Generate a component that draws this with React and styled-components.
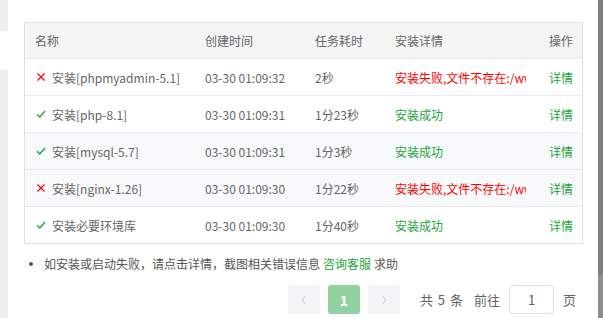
import React from "react";
import styled, { createGlobalStyle } from "styled-components";

const GlobalStyle = createGlobalStyle`
  html, body {
    margin: 0;
    padding: 0;
    background: #fff;
  }
  body {
    font-family: "Microsoft YaHei", "Noto Sans CJK SC", "Liberation Sans", sans-serif;
    font-size: 12px;
    color: #666;
  }
`;

const rows = [
  { ok: false, name: "安装[phpmyadmin-5.1]", time: "03-30 01:09:32", cost: "2秒", detail: "安装失败,文件不存在:/ww" },
  { ok: true, name: "安装[php-8.1]", time: "03-30 01:09:31", cost: "1分23秒", detail: "安装成功" },
  { ok: true, name: "安装[mysql-5.7]", time: "03-30 01:09:31", cost: "1分3秒", detail: "安装成功", shade: true },
  { ok: false, name: "安装[nginx-1.26]", time: "03-30 01:09:30", cost: "1分22秒", detail: "安装失败,文件不存在:/ww", shade: true },
  { ok: true, name: "安装必要环境库", time: "03-30 01:09:30", cost: "1分40秒", detail: "安装成功" },
];

const Page = styled.div`
  display: flex;
  width: 603px;
  height: 318px;
  overflow: hidden;
`;

const LeftStrip = styled.div`
  width: 8px;
  display: flex;
  flex-direction: column;
`;

const StripPart = styled.div`
  height: ${(p) => (p.h ? `${p.h}px` : "auto")};
  flex: ${(p) => (p.h ? "none" : 1)};
  background: ${(p) => (p.blank ? "#fff" : "#efefef")};
`;

const Main = styled.div`
  flex: 1;
  padding: 22px 14px 0 16px;
`;

const ScrollBar = styled.div`
  width: 5px;
  margin-left: 1px;
  display: flex;
  flex-direction: column;
`;

const ScrollPart = styled.div`
  height: ${(p) => (p.h ? `${p.h}px` : "auto")};
  flex: ${(p) => (p.h ? "none" : 1)};
  background: ${(p) => p.color};
`;

const Table = styled.div`
  border: 1px solid #e0e0e0;
  border-bottom-color: #e4e4e4;
`;

const Row = styled.div`
  display: grid;
  grid-template-columns: 170px 110px 80px 156px 1fr;
  height: ${(p) => (p.head ? 35 : 36)}px;
  align-items: center;
  background: ${(p) => (p.head ? "#f4f4f4" : p.shade ? "#f8f9fb" : "#fff")};
  border-bottom: 1px solid #e8ebef;
  &:last-child {
    border-bottom: none;
  }
`;

const Cell = styled.div`
  padding: 0 ${(p) => (p.right ? "9px" : "10px")} 0 10px;
  white-space: nowrap;
  overflow: hidden;
  display: flex;
  align-items: center;
  justify-content: ${(p) => (p.right ? "flex-end" : "flex-start")};
  color: ${(p) => p.color || "#666"};
`;

const Clip = styled.span`
  display: block;
  max-width: 131px;
  overflow: hidden;
  white-space: nowrap;
`;

const StatusIcon = styled.svg`
  width: 10px;
  height: 10px;
  margin: 0 6px 0 1px;
  flex: none;
`;

const Notes = styled.ul`
  margin: 10px 0 0;
  padding: 0 0 0 20px;
  line-height: 20px;
  color: #555;
`;

const Note = styled.li`
  list-style: none;
  position: relative;
  &::before {
    content: "";
    position: absolute;
    left: -15px;
    top: 8px;
    width: 4px;
    height: 4px;
    border-radius: 50%;
    background: #555;
  }
`;

const Link = styled.a`
  color: #20a53a;
  text-decoration: none;
  margin: 0 3px;
`;

const Pager = styled.div`
  display: flex;
  align-items: center;
  justify-content: flex-end;
  margin-top: 11px;
  padding-right: 7px;
  color: #606266;
  font-size: 13px;
`;

const PageBtn = styled.button`
  width: 32px;
  height: 29px;
  margin-right: 8px;
  border: none;
  border-radius: 3px;
  padding: 0;
  display: flex;
  align-items: center;
  justify-content: center;
  background: ${(p) => (p.active ? "#91d2a0" : "#f4f4f6")};
  color: ${(p) => (p.active ? "#fff" : "#c0c4cc")};
  font-family: inherit;
  font-size: 14px;
  font-weight: bold;
`;

const Total = styled.span`
  margin-left: 12px;
  margin-right: 11px;
  word-spacing: 2px;
`;

const JumpInput = styled.div`
  width: 43px;
  height: 27px;
  margin: 0 9px 0 9px;
  border: 1px solid #dcdfe6;
  border-radius: 4px;
  display: flex;
  align-items: center;
  justify-content: center;
  color: #606266;
`;

const Check = () => (
  <StatusIcon viewBox="0 0 10 10">
    <path d="M1 5.2 L3.8 8 L9 2" fill="none" stroke="#20a53a" strokeWidth="1.4" />
  </StatusIcon>
);

const Cross = () => (
  <StatusIcon viewBox="0 0 10 10">
    <path d="M1.5 1.5 L8.5 8.5 M8.5 1.5 L1.5 8.5" fill="none" stroke="#f00" strokeWidth="1.2" />
  </StatusIcon>
);

const Arrow = ({ left }) => (
  <svg width="8" height="10" viewBox="0 0 8 10">
    <path d={left ? "M5.5 1 L2 5 L5.5 9" : "M2.5 1 L6 5 L2.5 9"} fill="none" stroke="#c0c4cc" strokeWidth="1" />
  </svg>
);

export default function App() {
  return (
    <>
      <GlobalStyle />
      <Page>
        <LeftStrip>
          <StripPart h={31} />
          <StripPart h={39} blank />
          <StripPart />
        </LeftStrip>
        <Main>
          <Table>
            <Row head>
              <Cell>名称</Cell>
              <Cell>创建时间</Cell>
              <Cell>任务耗时</Cell>
              <Cell>安装详情</Cell>
              <Cell right>操作</Cell>
            </Row>
            {rows.map((r) => (
              <Row key={r.name} shade={r.shade}>
                <Cell>
                  {r.ok ? <Check /> : <Cross />}
                  {r.name}
                </Cell>
                <Cell>{r.time}</Cell>
                <Cell>{r.cost}</Cell>
                <Cell color={r.ok ? "#20a53a" : "#f00"}>
                  <Clip>{r.detail}</Clip>
                </Cell>
                <Cell right color="#20a53a">详情</Cell>
              </Row>
            ))}
          </Table>
          <Notes>
            <Note>
              如安装或启动失败，请点击详情，截图相关错误信息
              <Link>咨询客服</Link>求助
            </Note>
          </Notes>
          <Pager>
            <PageBtn>
              <Arrow left />
            </PageBtn>
            <PageBtn active>1</PageBtn>
            <PageBtn>
              <Arrow />
            </PageBtn>
            <Total>共 5 条</Total>
            前往
            <JumpInput>1</JumpInput>
            页
          </Pager>
        </Main>
        <ScrollBar>
          <ScrollPart h={275} color="#7d7d7d" />
          <ScrollPart color="#8d8d8d" />
        </ScrollBar>
      </Page>
    </>
  );
}
